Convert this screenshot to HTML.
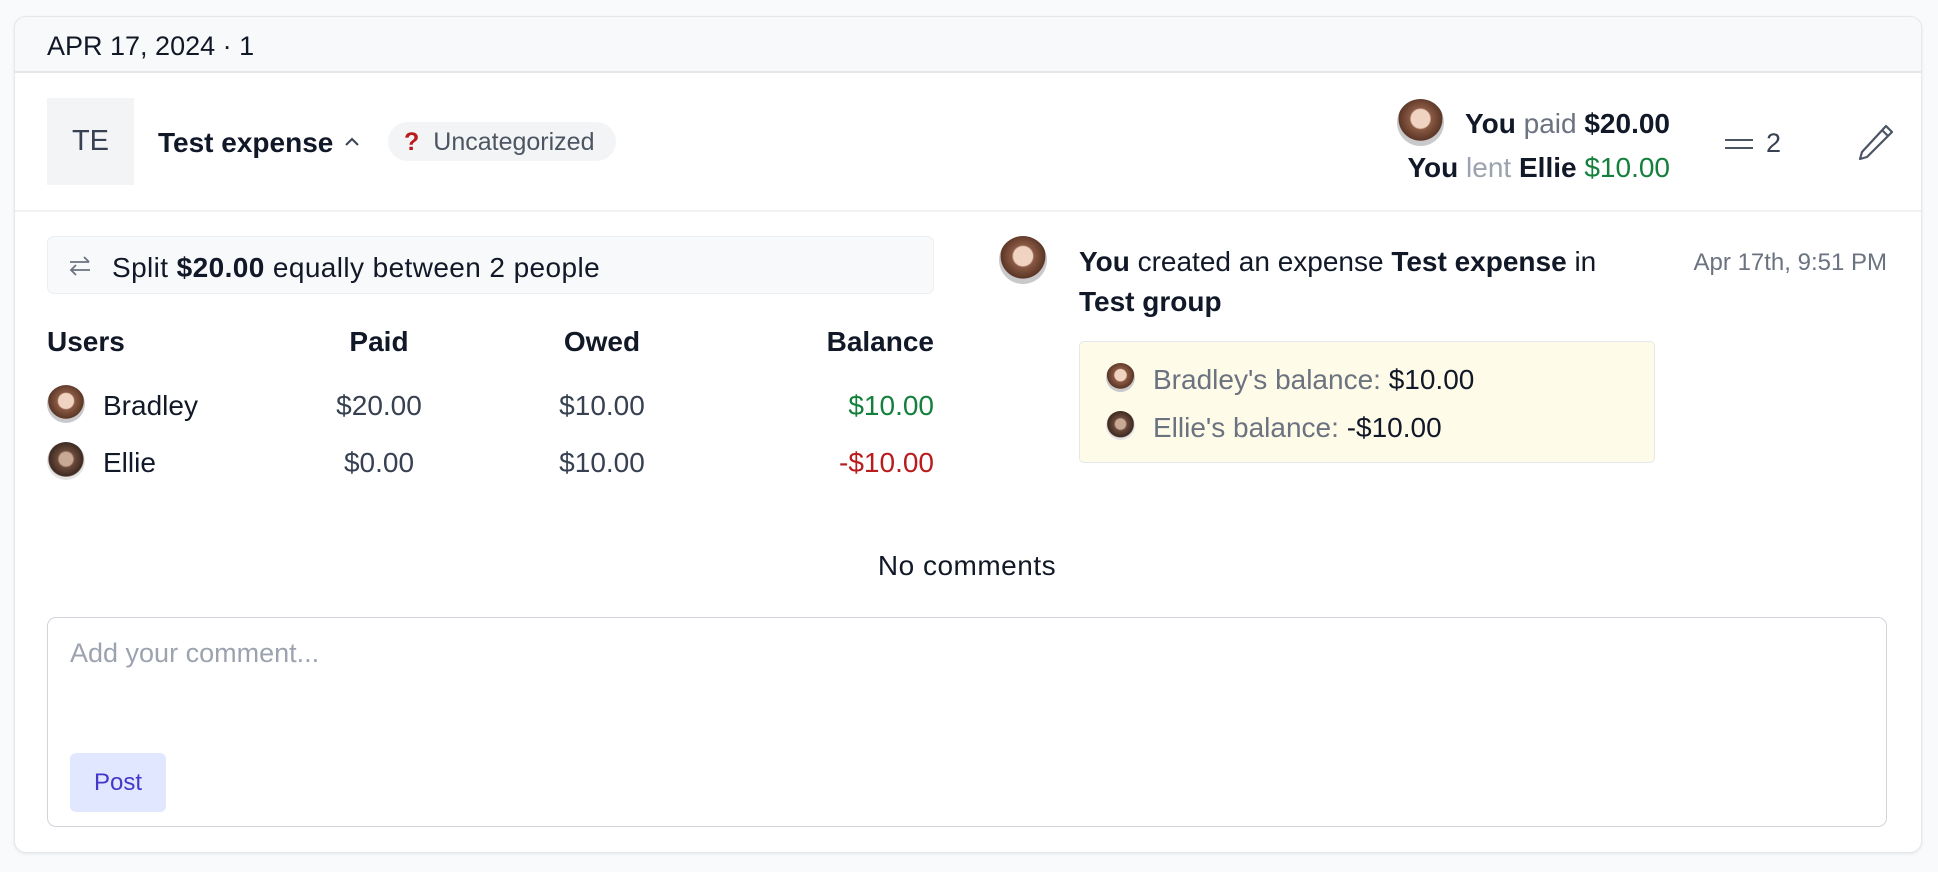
<!DOCTYPE html>
<html><head><meta charset="utf-8"><style>
*{box-sizing:border-box;margin:0;padding:0}
body{width:1938px;height:872px;background:#f9fafb;font-family:"Liberation Sans",Arial,sans-serif;color:#111827;position:relative;overflow:hidden}
.a{position:absolute;white-space:nowrap}
.card{position:absolute;left:14px;top:16px;width:1908px;height:837px;background:#fff;border:1px solid #e5e7eb;border-radius:12px;box-shadow:0 1px 3px rgba(0,0,0,.08);overflow:hidden}
.av{position:absolute;border-radius:50%;background:radial-gradient(circle at 50% 42%,#f1d3c2 0 26%,#8a5a44 30%,#5b3626 60%,#c9c9cc 62%);}
.av2{background:radial-gradient(circle at 50% 45%,#c8a995 0 24%,#6b4a3a 30%,#3e2a22 60%,#e5e5e5 64%);}
.b{font-weight:bold}
.g{color:#6b7280}
.f{font-size:28px}
</style></head><body>
<div class="card"></div>
<div class="a" style="left:15px;top:17px;width:1906px;height:56px;background:#f8f9fa;border-bottom:2px solid #e5e7eb;border-radius:11px 11px 0 0"></div>
<div class="a" style="left:47px;top:31px;font-size:27px">APR 17, 2024 · 1</div>

<div class="a" style="left:47px;top:98px;width:87px;height:87px;background:#f3f4f6;font-size:29px;line-height:87px;text-align:center;color:#374151">TE</div>
<div class="a b f" style="left:158px;top:127px">Test expense<svg style="margin-left:10px;vertical-align:3px" width="18" height="14" viewBox="0 0 18 14"><path d="M3 10 L9 4 L15 10" fill="none" stroke="#374151" stroke-width="2"/></svg></div>
<div class="a" style="left:388px;top:122px;width:228px;height:39px;background:#f3f4f6;border-radius:20px;font-size:25px;line-height:40px;color:#4b5563"><span style="color:#b91c1c;font-weight:bold;margin-left:16px;margin-right:14px">?</span>Uncategorized</div>

<div class="av" style="left:1397px;top:99px;width:47px;height:47px"></div>
<div class="a f" style="right:268px;top:108px"><span class="b">You</span> <span class="g">paid</span> <span class="b">$20.00</span></div>
<div class="a f" style="right:268px;top:152px"><span class="b">You</span> <span style="color:#9ca3af">lent</span> <span class="b">Ellie</span> <span style="color:#15803d">$10.00</span></div>
<div class="a" style="left:1725px;top:139px;width:28px;height:2px;background:#4b5563"></div>
<div class="a" style="left:1725px;top:147px;width:28px;height:2px;background:#4b5563"></div>
<div class="a" style="left:1766px;top:128px;font-size:27px;color:#374151">2</div>
<svg class="a" style="left:1856px;top:122px" width="40" height="40" viewBox="0 0 40 40"><path d="M30 4 L36 10 L11 35 L4 37 L6 30 Z M26 8 L32 14" fill="none" stroke="#4b5563" stroke-width="2.2" stroke-linejoin="round"/></svg>

<div class="a" style="left:15px;top:210px;width:1906px;height:2px;background:#f0f1f3"></div>

<div class="a" style="left:47px;top:236px;width:887px;height:58px;background:#f8f9fa;border:1px solid #eceef0;border-radius:7px"></div>
<svg class="a" style="left:66px;top:252px" width="28" height="28" viewBox="0 0 28 28"><path d="M4 10 H23 M18 5 L23 10 M24 18 H5 M10 13 L5 18 L10 23" fill="none" stroke="#6b7280" stroke-width="1.8"/></svg>
<div class="a f" style="left:112px;top:252px;letter-spacing:0.4px">Split <span class="b">$20.00</span> equally between 2 people</div>

<div class="a b f" style="left:47px;top:326px">Users</div>
<div class="a b f" style="left:329px;width:100px;text-align:center;top:326px">Paid</div>
<div class="a b f" style="left:552px;width:100px;text-align:center;top:326px">Owed</div>
<div class="a b f" style="left:734px;width:200px;text-align:right;top:326px">Balance</div>

<div class="av" style="left:47px;top:385px;width:38px;height:38px"></div>
<div class="a f" style="left:103px;top:390px">Bradley</div>
<div class="a f" style="left:309px;width:140px;text-align:center;top:390px;color:#374151">$20.00</div>
<div class="a f" style="left:532px;width:140px;text-align:center;top:390px;color:#374151">$10.00</div>
<div class="a f" style="left:734px;width:200px;text-align:right;top:390px;color:#15803d">$10.00</div>

<div class="av av2" style="left:47px;top:442px;width:38px;height:38px"></div>
<div class="a f" style="left:103px;top:447px">Ellie</div>
<div class="a f" style="left:309px;width:140px;text-align:center;top:447px;color:#374151">$0.00</div>
<div class="a f" style="left:532px;width:140px;text-align:center;top:447px;color:#374151">$10.00</div>
<div class="a f" style="left:734px;width:200px;text-align:right;top:447px;color:#b91c1c">-$10.00</div>

<div class="av" style="left:999px;top:236px;width:48px;height:48px"></div>
<div class="a f" style="left:1079px;top:246px"><span class="b">You</span> created an expense <span class="b">Test expense</span> in</div>
<div class="a b f" style="left:1079px;top:286px">Test group</div>
<div class="a" style="right:51px;top:249px;font-size:24px;color:#6b7280">Apr 17th, 9:51 PM</div>

<div class="a" style="left:1079px;top:341px;width:576px;height:122px;background:#fefbe8;border:1.5px solid #e5e7eb;border-radius:5px"></div>
<div class="av" style="left:1106px;top:363px;width:29px;height:29px"></div>
<div class="a f" style="left:1153px;top:364px;color:#6b7280">Bradley's balance: <span style="color:#111827">$10.00</span></div>
<div class="av av2" style="left:1106px;top:411px;width:29px;height:29px"></div>
<div class="a f" style="left:1153px;top:412px;color:#6b7280">Ellie's balance: <span style="color:#111827">-$10.00</span></div>

<div class="a f" style="left:0;width:1934px;text-align:center;top:550px;letter-spacing:0.5px">No comments</div>

<div class="a" style="left:47px;top:617px;width:1840px;height:210px;border:1.5px solid #d1d5db;border-radius:9px"></div>
<div class="a" style="left:70px;top:638px;font-size:27px;color:#9ca3af">Add your comment...</div>
<div class="a" style="left:70px;top:753px;width:96px;height:59px;background:#e0e7ff;border-radius:6px;font-size:24px;line-height:60px;text-align:center;color:#4338ca">Post</div>
</body></html>
